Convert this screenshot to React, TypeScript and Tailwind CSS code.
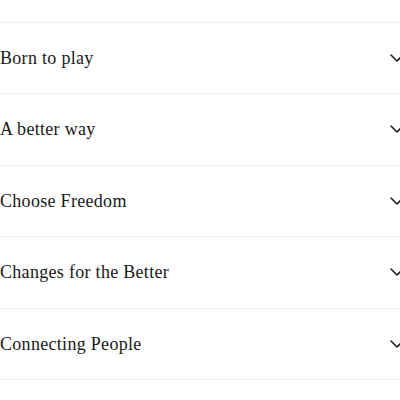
import { ChevronDown } from 'lucide-react'

const ITEMS = ['Born to play', 'A better way', 'Choose Freedom', 'Changes for the Better', 'Connecting People']

export default function App() {
  return (
    <div className="h-[400px] w-[400px] overflow-hidden bg-white pt-[21.5px]">
      <div className="-mr-[9px] border-b border-[#ececec]">
        {ITEMS.map((title) => (
          <div
            key={title}
            className="flex h-[71.5px] items-center justify-between border-t border-[#ececec]"
          >
            <span
              className="text-[18px] leading-none tracking-[0.3px] text-[#1a1a1a]"
              style={{ fontFamily: '"Liberation Serif", "DejaVu Serif", serif' }}
            >
              {title}
            </span>
            <ChevronDown className="h-6 w-6 text-[#1f1f1f]" strokeWidth={1.6} />
          </div>
        ))}
      </div>
    </div>
  )
}
